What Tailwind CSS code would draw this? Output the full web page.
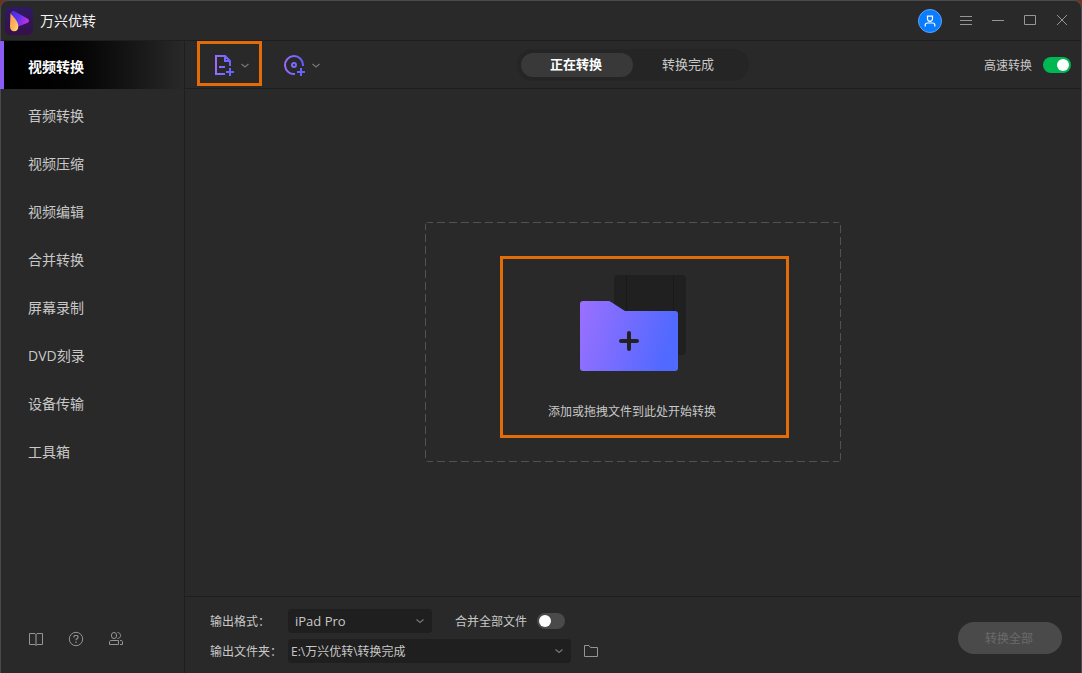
<!DOCTYPE html>
<html lang="zh-CN">
<head>
  <meta charset="UTF-8" />
  <meta name="viewport" content="width=device-width, initial-scale=1.0" />
  <title>万兴优转</title>
  <script src="https://cdn.jsdelivr.net/npm/@tailwindcss/browser@4"></script>
</head>
<body class="bg-[#6e3320] font-['Open_Sans','Noto_Sans_CJK_SC',sans-serif] text-xs text-[#c8c8c8]">
  <div class="flex flex-col min-h-screen bg-[#292929] border border-b-0 border-[#4a4a4a] rounded-t-lg">

    <!-- Title bar -->
    <header class="flex items-center h-10 pl-1 pr-[3px] border-b border-[#1e1e1e]">
      <svg class="size-7" viewBox="0 0 28 28">
        <defs>
          <linearGradient id="logoBg" x1="0" y1="0" x2="0" y2="1">
            <stop offset="0" stop-color="#2f1a63" />
            <stop offset="1" stop-color="#35104a" />
          </linearGradient>
          <linearGradient id="logoPlay" x1="0" y1="0" x2="1" y2="0.3">
            <stop offset="0" stop-color="#4a28e8" />
            <stop offset="0.5" stop-color="#5b35f0" />
            <stop offset="1" stop-color="#c02ee0" />
          </linearGradient>
          <linearGradient id="logoDrop" x1="0" y1="0" x2="1" y2="1">
            <stop offset="0" stop-color="#ff9a4d" />
            <stop offset="0.6" stop-color="#ffb45c" />
            <stop offset="1" stop-color="#ffe27a" />
          </linearGradient>
        </defs>
        <rect width="28" height="28" rx="5" fill="url(#logoBg)" />
        <path d="M6 5.500C6.500 4 8 3.500 9.500 4.300L22.800 11.800C24.500 12.900 24.500 14.700 22.800 15.800L12 20Z" fill="url(#logoPlay)" />
        <path d="M5.500 6C8 10 13.300 13.500 13.300 19.500C13.300 22.500 11.800 24.200 9.300 24.200C6.700 24.200 5 22.500 5 19.500Z" fill="url(#logoDrop)" />
      </svg>
      <h1 class="ml-[7px] text-sm text-[#f4f4f4]">万兴优转</h1>
      <div class="flex items-center ml-auto">
        <button type="button" aria-label="账户" class="mr-2 mt-px size-6 rounded-full bg-[#0a7cff] border border-[#58a5fb] flex items-center justify-center">
          <svg class="size-3" viewBox="0 0 12 12" fill="none" stroke="#fff" stroke-width="1.200">
            <path d="M3.500 1.200H8.500V3.800A2.500 2.500 0 0 1 3.500 3.800ZM1.200 11.500V10A2 2 0 0 1 3.200 8H8.800A2 2 0 0 1 10.800 10V11.500" />
          </svg>
        </button>
        <button type="button" aria-label="菜单" class="w-8 h-8 flex items-center justify-center">
          <svg class="size-4" viewBox="0 0 16 16" stroke="#969696"><path d="M2 3.500H14M2 7.500H14M2 11.500H14" /></svg>
        </button>
        <button type="button" aria-label="最小化" class="w-8 h-8 flex items-center justify-center">
          <svg class="size-4" viewBox="0 0 16 16" stroke="#969696"><path d="M2 7.500H14" /></svg>
        </button>
        <button type="button" aria-label="最大化" class="w-8 h-8 flex items-center justify-center">
          <svg class="size-4" viewBox="0 0 16 16" fill="none" stroke="#969696"><path d="M2.500 2.500H13.500V11.500H2.500Z" /></svg>
        </button>
        <button type="button" aria-label="关闭" class="w-8 h-8 flex items-center justify-center">
          <svg class="size-4" viewBox="0 0 16 16" stroke="#969696"><path d="M3 2L13 12M13 2L3 12" /></svg>
        </button>
      </div>
    </header>

    <div class="flex flex-1">
      <!-- Sidebar -->
      <aside class="w-[184px] shrink-0 flex flex-col border-r border-[#1e1e1e]">
        <nav class="flex flex-col text-sm">
          <a href="#" class="-ml-px mb-[3px] h-12 pl-6 pt-1 flex items-center border-l-4 border-[#8b5cf6] bg-linear-to-r from-black to-[#292929] font-bold text-white">视频转换</a>
          <a href="#" class="h-12 pl-[27px] flex items-center">音频转换</a>
          <a href="#" class="h-12 pl-[27px] flex items-center">视频压缩</a>
          <a href="#" class="h-12 pl-[27px] flex items-center">视频编辑</a>
          <a href="#" class="h-12 pl-[27px] flex items-center">合并转换</a>
          <a href="#" class="h-12 pl-[27px] flex items-center">屏幕录制</a>
          <a href="#" class="h-12 pl-[27px] flex items-center">DVD刻录</a>
          <a href="#" class="h-12 pl-[27px] flex items-center">设备传输</a>
          <a href="#" class="h-12 pl-[27px] flex items-center">工具箱</a>
        </nav>
        <div class="mt-auto flex gap-6 pl-[27px] pb-[26px]">
          <button type="button" aria-label="用户指南">
            <svg class="size-4" viewBox="0 0 16 16" fill="none" stroke="#959595">
              <path d="M8 3.500L7 2.500H1.500V13.500H7L8 14.500L9 13.500H14.500V2.500H9Z" />
              <path d="M8 3V14.500" stroke-width="1.500" stroke="#7c7c7c" />
            </svg>
          </button>
          <button type="button" aria-label="帮助">
            <svg class="size-4" viewBox="0 0 16 16" fill="none" stroke="#959595">
              <circle cx="8" cy="8" r="6.700" />
              <path d="M6 6.500V5.500C6 5 6.500 4.500 7 4.500H9C9.500 4.500 10 5 10 5.500V6.500C10 7.500 8 7.500 8 9.300M8 10.500V12" stroke-width="1.200" />
            </svg>
          </button>
          <button type="button" aria-label="社区">
            <svg class="size-4" viewBox="0 0 16 16" fill="none" stroke="#959595">
              <path d="M3.500 4A2.500 2.500 0 0 1 8.500 4V5A2.500 2.500 0 0 1 3.500 5ZM9.500 1.500C11 1.500 12.500 2.500 12.500 4.500S11 7.500 9.500 7.500M1.500 13.500V11C1.500 10 2 9.500 3 9.500H10.500V13.500ZM12 9.500H13C14 9.500 14.500 10 14.500 11V13.500H12" />
            </svg>
          </button>
        </div>
      </aside>

      <main class="flex-1 flex flex-col">
        <!-- Toolbar -->
        <div class="grid grid-cols-[1fr_auto_1fr] items-center h-12 border-b border-[#1e1e1e]">
          <div class="self-start flex pl-3">
            <button type="button" aria-label="添加文件" class="relative w-[65px] h-[45px] pt-[3px] pl-4 flex items-center gap-1">
              <span class="absolute inset-0 border-3 border-[#e36c09]"></span>
              <svg class="size-6" viewBox="0 0 24 24" fill="none" stroke="url(#accent)" stroke-width="2">
                <defs>
                  <linearGradient id="accent" gradientUnits="userSpaceOnUse" x1="2" y1="0" x2="22" y2="0">
                    <stop offset="0" stop-color="#9b6bff" />
                    <stop offset="1" stop-color="#5b62ff" />
                  </linearGradient>
                </defs>
                <path d="M12 21H3V3H12L17 8V13M12 3V8H17M6 14H12M17 15V23M13 19H21" />
              </svg>
              <svg class="size-2" viewBox="0 0 8 8" fill="none" stroke="#777" stroke-width="1.200"><path d="M0.500 3L4 6L7.500 3" /></svg>
            </button>
            <button type="button" aria-label="加载光盘" class="h-[45px] pt-[3px] pl-5 flex items-center gap-[6px]">
              <svg class="size-6" viewBox="0 0 24 24" fill="none" stroke="url(#accent)" stroke-width="2">
                <path d="M13 21A9 9 0 1 1 21 12V13" />
                <circle cx="12" cy="12" r="2" />
                <path d="M19 15V23M15 19H23" />
              </svg>
              <svg class="size-2" viewBox="0 0 8 8" fill="none" stroke="#777" stroke-width="1.200"><path d="M0.500 3L4 6L7.500 3" /></svg>
            </button>
          </div>
          <div class="flex p-1 rounded-full bg-[#252525] text-[13px]">
            <button type="button" class="w-28 h-6 pr-[2px] rounded-full bg-[#393939] font-bold text-white">正在转换</button>
            <button type="button" class="w-28 h-6 pr-[2px] rounded-full">转换完成</button>
          </div>
          <label class="justify-self-end flex items-center gap-[11px] pr-[10px]">
            <span class="pt-[2px]">高速转换</span>
            <input type="checkbox" checked class="appearance-none relative w-7 h-4 rounded-full bg-[#4a4a4a] checked:bg-[#00b853] before:absolute before:top-[2px] before:left-[2px] before:size-3 before:rounded-full before:bg-white checked:before:left-[14px]" />
          </label>
        </div>

        <!-- Drop area -->
        <section class="flex-1 flex items-center justify-center pb-[2px]">
          <div class="relative w-[416px] h-[240px] rounded-sm overflow-hidden">
            <svg class="absolute inset-0 w-full h-full" stroke="#525252" stroke-width="2" stroke-dasharray="8 4">
              <line x1="0" y1="0" x2="100%" y2="0" />
              <line x1="0" y1="100%" x2="100%" y2="100%" />
              <line x1="0" y1="0" x2="0" y2="100%" />
              <line x1="100%" y1="3" x2="100%" y2="100%" />
            </svg>
            <span class="absolute left-[75px] top-[34px] w-[289px] h-[182px] border-3 border-[#e36c09]"></span>
            <button type="button" class="w-full h-full pt-[53px] pr-[2px] flex flex-col items-center">
              <svg class="w-[106px] h-24 ml-[2px]" viewBox="0 0 106 96">
                <defs>
                  <linearGradient id="folder" x1="0" y1="0" x2="1" y2="0.200">
                    <stop offset="0" stop-color="#9b70ff" />
                    <stop offset="1" stop-color="#5069ff" />
                  </linearGradient>
                </defs>
                <rect x="34" y="0" width="72" height="80" rx="4" fill="#202020" />
                <path d="M46.500 0V40M93.500 0V40" stroke="#191919" />
                <path d="M3 26H29L31 27L45 36H95A3 3 0 0 1 98 39V93A3 3 0 0 1 95 96H3A3 3 0 0 1 0 93V29A3 3 0 0 1 3 26Z" fill="url(#folder)" />
                <path d="M49 58V74M41 66H57" stroke="#222" stroke-width="4" stroke-linecap="round" />
              </svg>
              <span class="mt-[33px]">添加或拖拽文件到此处开始转换</span>
            </button>
          </div>
        </section>

        <!-- Output settings -->
        <footer class="flex items-center h-[77px] pt-[2px] pl-[25px] pr-[19px] border-t border-[#1e1e1e]">
          <div class="flex flex-col gap-[6px]">
            <div class="flex items-center">
              <label for="format" class="w-[78px] pt-[2px]">输出格式：</label>
              <div class="relative">
                <select id="format" class="block appearance-none w-36 h-6 pt-px pl-[7px] rounded-sm bg-[#1f1f1f] text-[13px]">
                  <option>iPad Pro</option>
                </select>
                <svg class="absolute right-2 top-2 size-2 pointer-events-none" viewBox="0 0 8 8" fill="none" stroke="#777" stroke-width="1.200"><path d="M0.500 2.500L4 5.500L7.500 2.500" /></svg>
              </div>
              <label class="ml-[23px] flex items-center gap-[10px]">
                <span class="pt-[2px]">合并全部文件</span>
                <input type="checkbox" class="appearance-none relative w-7 h-4 rounded-full bg-[#4a4a4a] checked:bg-[#00b853] before:absolute before:top-[2px] before:left-[2px] before:size-3 before:rounded-full before:bg-white checked:before:left-[14px]" />
              </label>
            </div>
            <div class="flex items-center">
              <label for="folderPath" class="w-[78px] pt-[2px]">输出文件夹：</label>
              <div class="relative">
                <select id="folderPath" class="block appearance-none w-[283px] h-6 pt-px pl-[3px] rounded-sm bg-[#1f1f1f]">
                  <option>E:\万兴优转\转换完成</option>
                </select>
                <svg class="absolute right-2 top-2 size-2 pointer-events-none" viewBox="0 0 8 8" fill="none" stroke="#777" stroke-width="1.200"><path d="M0.500 2.500L4 5.500L7.500 2.500" /></svg>
              </div>
              <button type="button" aria-label="打开文件夹" class="ml-3">
                <svg class="size-4" viewBox="0 0 16 16" fill="none" stroke="#959595"><path d="M1.500 13.500V2.500H6L7.500 4.500H14.500V13.500Z" /></svg>
              </button>
            </div>
          </div>
          <button type="button" disabled class="ml-auto w-[104px] h-8 mt-1 pt-px pr-[2px] rounded-full bg-[#4a4a4a] text-[#6b6b6b]">转换全部</button>
        </footer>
      </main>
    </div>
  </div>
</body>
</html>
